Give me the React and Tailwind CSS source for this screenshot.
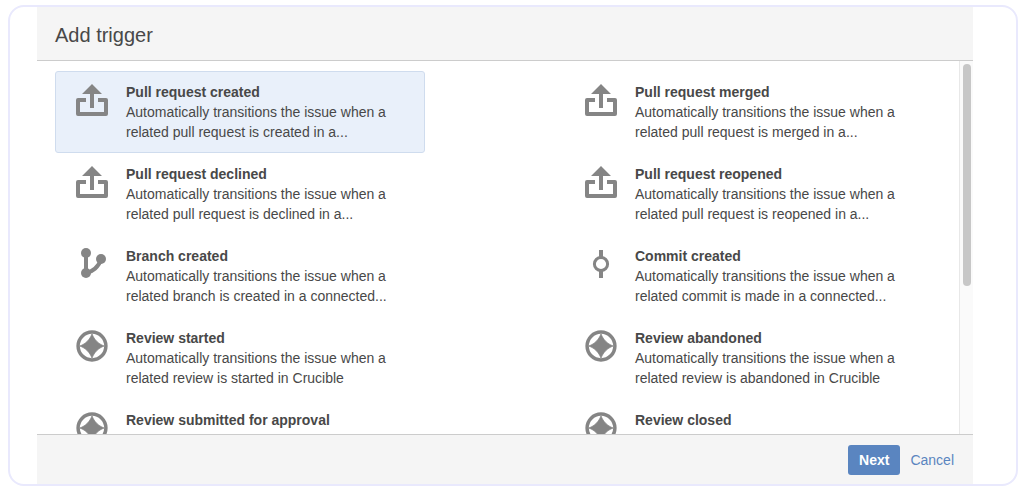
import { useState } from "react";

function PullRequestIcon() {
  return (
    <svg viewBox="0 0 32 32" className="size-8" fill="#858585" aria-hidden="true">
      <path d="M16 0 26 10H18v14h-4V10H6z" />
      <path d="M10 14v4H4v10h24V18h-6v-4h8a2 2 0 0 1 2 2V30a2 2 0 0 1-2 2H2a2 2 0 0 1-2-2V16a2 2 0 0 1 2-2z" />
    </svg>
  );
}

function BranchIcon() {
  return (
    <svg viewBox="0 0 32 32" className="size-8" fill="#858585" aria-hidden="true">
      <circle cx="10" cy="5" r="5" />
      <circle cx="10" cy="25" r="5" />
      <circle cx="25" cy="11" r="5" />
      <path d="M10 5v20C16 24 23 19 25 11" fill="none" stroke="#858585" strokeWidth="4" />
    </svg>
  );
}

function CommitIcon() {
  return (
    <svg viewBox="0 0 32 32" className="size-8" fill="none" stroke="#858585" strokeWidth="4" aria-hidden="true">
      <circle cx="16" cy="16" r="6.600" strokeWidth="3" />
      <path d="M16 2v7M16 23v7" />
    </svg>
  );
}

function ReviewIcon() {
  return (
    <svg viewBox="0 0 32 32" className="size-8" aria-hidden="true">
      <circle cx="16" cy="16" r="13.900" fill="none" stroke="#858585" strokeWidth="3.500" />
      <path
        d="M16 4C18.500 10 22 13.500 28 16 22 18.500 18.500 22 16 28 13.500 22 10 18.500 4 16 10 13.500 13.500 10 16 4z"
        fill="#858585"
        stroke="#858585"
        strokeWidth="0.800"
      />
    </svg>
  );
}

const triggers = [
  { Icon: PullRequestIcon, title: "Pull request created", text: "related pull request is created in a..." },
  { Icon: PullRequestIcon, title: "Pull request merged", text: "related pull request is merged in a..." },
  { Icon: PullRequestIcon, title: "Pull request declined", text: "related pull request is declined in a..." },
  { Icon: PullRequestIcon, title: "Pull request reopened", text: "related pull request is reopened in a..." },
  { Icon: BranchIcon, title: "Branch created", text: "related branch is created in a connected..." },
  { Icon: CommitIcon, title: "Commit created", text: "related commit is made in a connected..." },
  { Icon: ReviewIcon, title: "Review started", text: "related review is started in Crucible" },
  { Icon: ReviewIcon, title: "Review abandoned", text: "related review is abandoned in Crucible" },
  { Icon: ReviewIcon, title: "Review submitted for approval", text: "related review is submitted for approval..." },
  { Icon: ReviewIcon, title: "Review closed", text: "related review is closed in Crucible" },
];

function Trigger({ trigger, selected, onSelect }) {
  const { Icon, title, text } = trigger;
  return (
    <button
      type="button"
      aria-pressed={selected}
      onClick={onSelect}
      className={
        "flex items-start gap-[18px] rounded-[3px] border px-5 py-2.5 text-left text-sm leading-5 " +
        (selected ? "border-[#cfdcee] bg-[#e9f0fa]" : "border-transparent")
      }
    >
      <span className="shrink-0 pt-0.5">
        <Icon />
      </span>
      <span className="min-w-0 flex-1">
        <span className="block font-bold">{title}</span>
        <span className="block">Automatically transitions the issue when a {text}</span>
      </span>
    </button>
  );
}

export default function App() {
  const [selected, setSelected] = useState(0);
  return (
    <div className="h-screen bg-white pt-[5px] pr-1.5 pb-[5px] pl-2 font-['Liberation_Sans',Arial,sans-serif] text-[#484848]">
      <div className="h-full overflow-hidden rounded-2xl border-2 border-[#e9e9fd] pr-[43px] pl-[27px]">
        <section aria-labelledby="dialog-title" className="flex h-full flex-col">
          <header className="flex h-[54px] shrink-0 items-center border-b border-[#cccccc] bg-[#f5f5f5] px-[18px]">
            <h1 id="dialog-title" className="pt-0.5 text-xl leading-7">
              Add trigger
            </h1>
          </header>
          <div className="flex min-h-0 flex-1">
            <div className="min-w-0 flex-1 overflow-y-auto [scrollbar-width:none]">
              <div className="grid grid-cols-[repeat(2,370px)] justify-between pt-2.5 pr-[25px] pb-2.5 pl-[18px]">
                {triggers.map((trigger, index) => (
                  <Trigger
                    key={trigger.title}
                    trigger={trigger}
                    selected={index === selected}
                    onSelect={() => setSelected(index)}
                  />
                ))}
              </div>
            </div>
            <div className="flex w-3.5 shrink-0 justify-end border-l border-[#e8e8e8] bg-[#fafafa] pt-[3px] pr-0.5" aria-hidden="true">
              <div className="h-3/5 w-2 rounded-full bg-[#c7c7c7]" />
            </div>
          </div>
          <footer className="flex h-[50px] shrink-0 items-center justify-end gap-2.5 border-t border-[#cccccc] bg-[#f5f5f5] pr-[19px] text-sm">
            <button type="button" className="h-[30px] rounded-[3px] bg-[#5a85c0] px-[11px] font-bold text-white">
              Next
            </button>
            <a href="#cancel" className="text-[#5a85c0]">
              Cancel
            </a>
          </footer>
        </section>
      </div>
    </div>
  );
}
